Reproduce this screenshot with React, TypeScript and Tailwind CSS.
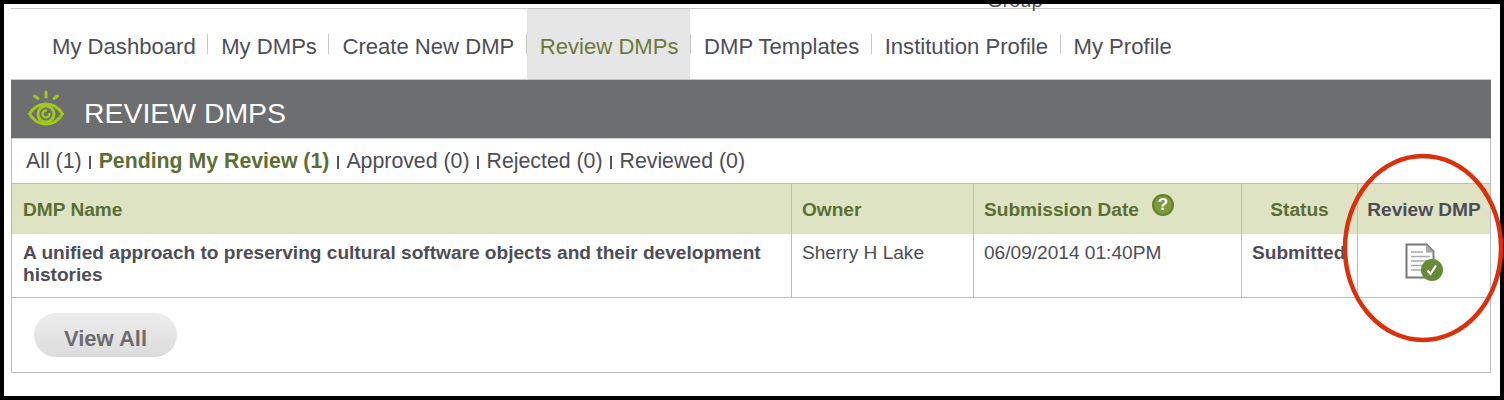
const F = "font-['Liberation_Sans',Arial,sans-serif]";

function Eye() {
  return (
    <svg width="38" height="38" viewBox="0 0 38 38" fill="none" className="shrink-0">
      <g stroke="#a0c81a" strokeLinecap="round">
        <path d="M19 2v5" strokeWidth="3" />
        <path d="M7.500 6l3.500 2.500" strokeWidth="3" />
        <path d="M30.500 6l-3.500 2.500" strokeWidth="3" />
        <path d="M2.500 24c4-6.500 9.500-10 16.500-10s12.500 3.500 16.500 10c-4 6.500-9.500 10-16.500 10s-12.500-3.500-16.500-10z" strokeWidth="3" />
        <circle cx="19" cy="24" r="8" strokeWidth="3" />
        <path d="M19 20.500a3.500 3.500 0 1 0 3.500 3.500" strokeWidth="2.500" />
      </g>
    </svg>
  );
}

function DocCheck() {
  return (
    <svg width="38" height="38" viewBox="0 0 38 38" fill="none">
      <path d="M1.500 1.500h20l7 7v26h-27z" fill="#fff" stroke="#77787b" strokeWidth="2" />
      <path d="M21 1.500v8h8z" fill="#a9abae" />
      <path d="M6 9h12M6 13.500h19M6 18h19M6 22.500h14M6 27h12" stroke="#a9abae" strokeWidth="1.500" />
      <circle cx="27" cy="27" r="11" fill="#668a36" />
      <path d="M22.500 27.500l3 3.500 5.500-8.500" stroke="#fff" strokeWidth="2.200" fill="none" />
    </svg>
  );
}

const tabs = ["My Dashboard", "My DMPs", "Create New DMP", "Review DMPs", "DMP Templates", "Institution Profile", "My Profile"];
const filters = ["All (1)", "Pending My Review (1)", "Approved (0)", "Rejected (0)", "Reviewed (0)"];

const headCell = "h-[50px] pt-[2px] bg-[#dde3c3] flex items-center font-bold";
const rowCell = "h-[64px] border-b border-[#bdbdbd] pt-[8px] leading-[22px]";

export default function App() {
  return (
    <div className={`${F} relative w-[1504px] h-[400px] text-[#4d4d57]`}>
      <div className="relative w-full h-full overflow-hidden bg-white border-4 border-black">
        <div className="absolute left-[983px] top-[-14px] z-10 text-[20px] leading-none text-[#55565a]">Group</div>
        <div className="ml-[7px] mr-[9px] mt-[4px] flex flex-col">
          <div className="h-[71px] border-t border-[#c8c8c8] pl-[34px] flex items-stretch">
            {tabs.map((t, i) => (
              <div key={t} className="flex items-start">
                <div className={`h-full pt-[24px] text-[22.100px] leading-[28px] whitespace-nowrap pr-[11.500px] ${i === 0 ? "pl-[7px]" : "pl-[13px]"} ${i === 3 ? "bg-[#e6e6e6] text-[#6b7a3c]" : ""}`}>
                  {t}
                </div>
                {i < 6 ? <div className="w-px h-[20px] mt-[25px] bg-[#c9c9c9]" /> : null}
              </div>
            ))}
          </div>
          <div className="border-x border-b border-[#bdbdbd] flex flex-col h-[294px]">
            <div className="h-[59px] -mx-px bg-[#6d6e70] flex items-center pl-[16px] gap-[19px] border-t border-[#c8c8c8]">
              <Eye />
              <span className="text-[28.400px] text-white leading-none mt-[8px]">REVIEW DMPS</span>
            </div>
            <div className="h-[45px] pt-[2px] flex items-center pl-[14px] text-[21.300px] whitespace-nowrap border-t border-[#d0d0d0]">
              {filters.map((f, i) => (
                <span key={f} className="flex items-center">
                  {i > 0 ? <span className="w-[2px] h-[13px] mx-[7.500px] bg-[#55565a]" /> : null}
                  <span className={i === 1 ? "font-bold text-[#5b6f35]" : ""}>{f}</span>
                </span>
              ))}
            </div>
            <div className="grid grid-cols-[779px_182px_268px_116px_1fr] border-t border-[#bdbdbd] text-[19.100px]">
              <div className={`${headCell} pl-[11px] text-[#5b6f35]`}>DMP Name</div>
              <div className={`${headCell} border-l border-[#bdbdbd] pl-[10px] text-[#5b6f35]`}>Owner</div>
              <div className={`${headCell} border-l border-[#bdbdbd] pl-[10px] text-[#5b6f35]`}>
                Submission Date
                <span className="ml-[13px] mt-[-10px] w-[22px] h-[22px] rounded-full bg-[#7d9a3c] border-2 border-[#66802e] flex items-center justify-center text-white text-[17px]">?</span>
              </div>
              <div className={`${headCell} border-l border-[#bdbdbd] justify-center text-[#5b6f35]`}>Status</div>
              <div className={`${headCell} border-l border-[#bdbdbd] justify-center whitespace-nowrap`}>Review DMP</div>

              <div className={`${rowCell} pl-[11px] font-bold`}>
                A unified approach to preserving cultural software objects and their development histories
              </div>
              <div className={`${rowCell} border-l pl-[10px]`}>Sherry H Lake</div>
              <div className={`${rowCell} border-l pl-[10px]`}>06/09/2014 01:40PM</div>
              <div className={`${rowCell} border-l pl-[10px] font-bold overflow-hidden whitespace-nowrap`}>Submitted</div>
              <div className="h-[64px] border-b border-l border-[#bdbdbd] flex justify-center pt-[9px]"><DocCheck /></div>
            </div>
            <div className="pl-[22px] pt-[15px]">
              <div className="w-[143px] h-[44px] pt-[7px] rounded-full bg-gradient-to-b from-[#ededed] to-[#dcdcdc] flex items-center justify-center font-bold text-[22px] text-[#6d6e71]">View All</div>
            </div>
          </div>
        </div>
      </div>
      <svg className="absolute left-[1339px] top-[150px]" width="165" height="196" viewBox="0 0 165 196" fill="none">
        <ellipse cx="84" cy="98" rx="78" ry="92" stroke="#d9310b" strokeWidth="4.500" />
      </svg>
    </div>
  );
}
